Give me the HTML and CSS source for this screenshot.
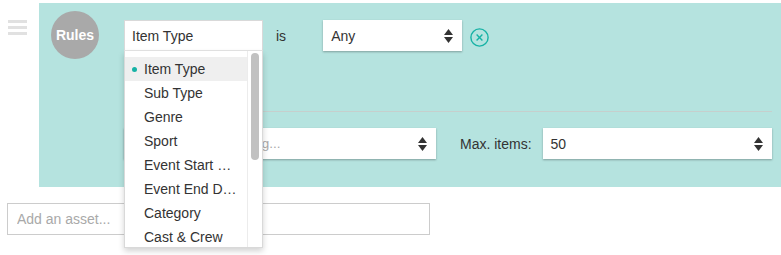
FILE: index.html
```html
<!DOCTYPE html>
<html lang="en">
<head>
    <meta charset="UTF-8">
    <title>Rules</title>
    <link rel="stylesheet" href="styles.css">
</head>
<body>
    <div class="rules-row">
        <div class="handle">
            <span></span>
            <span></span>
            <span></span>
        </div>

        <div class="panel">
            <div class="rules-badge">Rules</div>

            <div class="rules-body">
                <div class="cond-row">
                    <div class="field">
                        <div class="select open">Item Type</div>
                        <div class="dropdown">
                            <ul class="options">
                                <li class="active">Item Type</li>
                                <li>Sub Type</li>
                                <li>Genre</li>
                                <li>Sport</li>
                                <li>Event Start Date</li>
                                <li>Event End Date</li>
                                <li>Category</li>
                                <li>Cast &amp; Crew</li>
                            </ul>
                            <div class="track"><div class="thumb"></div></div>
                        </div>
                    </div>

                    <span class="label is-label">is</span>

                    <div class="select">
                        <span>Any</span>
                        <svg class="arrows" width="9" height="14" viewBox="0 0 9 14">
                            <path d="M4.5 0 L9 6 L0 6 Z" fill="#333"/>
                            <path d="M0 8 L9 8 L4.5 14 Z" fill="#333"/>
                        </svg>
                    </div>

                    <button class="remove-btn" title="Remove">
                        <svg width="19" height="19" viewBox="0 0 19 19" fill="none" stroke="#16b2a5" stroke-width="1.4">
                            <circle cx="9.5" cy="9.5" r="8.6"/>
                            <line x1="6.6" y1="6.6" x2="12.4" y2="12.4"/>
                            <line x1="12.4" y1="6.6" x2="6.6" y2="12.4"/>
                        </svg>
                    </button>
                </div>

                <div class="rules-line"></div>

                <div class="cond-row">
                    <div class="select wide">
                        <span class="placeholder">Choose a sort ordering...</span>
                        <svg class="arrows" width="9" height="14" viewBox="0 0 9 14">
                            <path d="M4.5 0 L9 6 L0 6 Z" fill="#333"/>
                            <path d="M0 8 L9 8 L4.5 14 Z" fill="#333"/>
                        </svg>
                    </div>

                    <span class="label max-label">Max. items:</span>

                    <div class="select grow">
                        <span>50</span>
                        <svg class="arrows" width="9" height="14" viewBox="0 0 9 14">
                            <path d="M4.5 0 L9 6 L0 6 Z" fill="#333"/>
                            <path d="M0 8 L9 8 L4.5 14 Z" fill="#333"/>
                        </svg>
                    </div>
                </div>
            </div>
        </div>
    </div>

    <input class="asset-input" type="text" placeholder="Add an asset...">
</body>
</html>
```

FILE: styles.css
```css
* {
    margin: 0;
    padding: 0;
    box-sizing: border-box;
}

html, body {
    height: 100%;
}

body {
    font-family: "Liberation Sans", Arial, sans-serif;
    font-size: 14px;
    color: #333;
    background: #ffffff;
    padding-top: 3px;
    min-height: 255px;
}

.rules-row {
    display: flex;
}

.handle {
    width: 39px;
    padding: 17px 0 0 8px;
    display: flex;
    flex-direction: column;
    gap: 3px;
}

.handle span {
    display: block;
    width: 19px;
    height: 3px;
    background: #e1e1e1;
}

.panel {
    flex: 1;
    display: flex;
    align-items: flex-start;
    background: #b5e3df;
    padding: 8px 9px 28px 12px;
}

.rules-badge {
    width: 48px;
    height: 48px;
    border-radius: 50%;
    background: #a9a9a9;
    color: #fff;
    font-weight: bold;
    font-size: 14px;
    display: flex;
    align-items: center;
    justify-content: center;
    margin-right: 25px;
    flex-shrink: 0;
}

.rules-body {
    flex: 1;
    margin-top: 9px;
}

.cond-row {
    display: flex;
    align-items: center;
    height: 31px;
}

.field {
    position: relative;
    z-index: 5;
}

.select {
    width: 139px;
    height: 31px;
    background: #fff;
    box-shadow: 0 1px 2px rgba(0, 0, 0, 0.3);
    padding: 0 9px 0 8px;
    display: flex;
    align-items: center;
    justify-content: space-between;
    white-space: nowrap;
}

.select.open {
    border: 1px solid #d9d9d9;
    border-bottom-color: #e6e6e6;
    box-shadow: none;
    padding-left: 7px;
    width: 139px;
}

.select.wide {
    width: 312px;
}

.select.grow {
    flex: 1;
}

.placeholder {
    color: #a9a9a9;
    font-size: 13.5px;
}

.arrows {
    flex-shrink: 0;
}

.label {
    color: #333;
}

.is-label {
    margin: 0 37px 0 13px;
}

.max-label {
    margin: 0 11px 0 24px;
}

.remove-btn {
    background: none;
    border: none;
    margin-left: 8px;
    margin-top: 3px;
    display: flex;
    cursor: pointer;
}

.dropdown {
    position: absolute;
    top: 31px;
    left: 0;
    width: 139px;
    height: 197px;
    background: #fff;
    border: 1px solid #d9d9d9;
    border-top: none;
    box-shadow: 0 3px 6px rgba(0, 0, 0, 0.18);
    display: flex;
    overflow: hidden;
}

.options {
    list-style: none;
    flex: 1;
    min-width: 0;
    padding-top: 6px;
}

.options li {
    height: 24px;
    line-height: 24px;
    padding: 0 6px 0 19px;
    white-space: nowrap;
    overflow: hidden;
    text-overflow: ellipsis;
    position: relative;
}

.options li.active {
    background: #efefef;
}

.options li.active::before {
    content: '';
    position: absolute;
    left: 7px;
    top: 10px;
    width: 5px;
    height: 5px;
    border-radius: 50%;
    background: #16b2a5;
}

.track {
    width: 15px;
    border-left: 1px solid #ececec;
    padding: 2px 3px 0 3px;
}

.thumb {
    height: 107px;
    border-radius: 4px;
    background: #c1c1c1;
}

.rules-line {
    margin: 60px 0 16px;
    border-top: 1px solid #c6cfcd;
}

.asset-input {
    display: block;
    margin: 16px 0 0 7px;
    width: 423px;
    height: 32px;
    border: 1px solid #cccccc;
    padding: 0 9px;
    font-family: "Liberation Sans", Arial, sans-serif;
    font-size: 14px;
    color: #333;
    outline: none;
}

.asset-input::placeholder {
    color: #a9a9a9;
}
```
